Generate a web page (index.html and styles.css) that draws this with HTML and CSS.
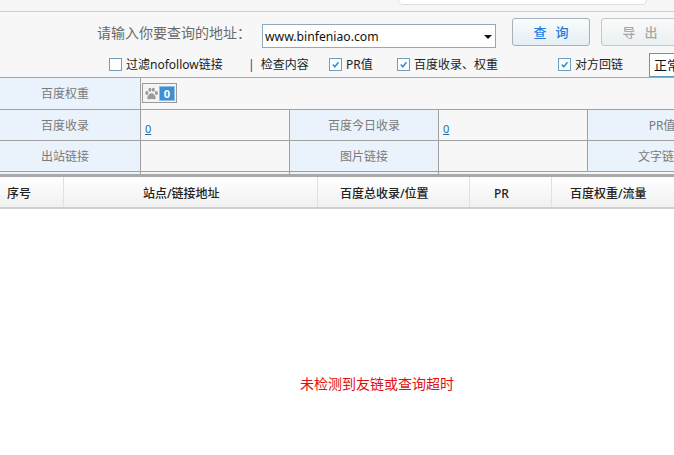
FILE: index.html
```html
<!DOCTYPE html>
<html lang="zh">
<head>
<meta charset="utf-8">
<title>友链查询</title>
<link rel="stylesheet" href="styles.css">
</head>
<body>
<div class="page">
  <div class="topstrip"><div class="topbox"></div></div>
  <form class="form">
    <div class="row-main">
      <span class="prompt">请输入你要查询的地址：</span>
      <div class="select"><span>www.binfeniao.com</span><i class="caret"></i></div>
      <button type="button" class="btn btn-query">查 询</button>
      <button type="button" class="btn btn-export">导 出</button>
    </div>
    <div class="row-opts">
      <span class="opt o1"><i class="cb"></i>过滤nofollow链接</span>
      <span class="opt o2"><b class="bar">|</b>检查内容</span>
      <span class="opt o3"><i class="cb on"><svg viewBox="0 0 14 14"><path d="M3.5 7l2.6 3L10.8 4" /></svg></i>PR值</span>
      <span class="opt o4"><i class="cb on"><svg viewBox="0 0 14 14"><path d="M3.5 7l2.6 3L10.8 4" /></svg></i>百度收录、权重</span>
      <span class="opt o5"><i class="cb on"><svg viewBox="0 0 14 14"><path d="M3.5 7l2.6 3L10.8 4" /></svg></i>对方回链</span>
      <span class="mode">正常</span>
    </div>
  </form>
  <div class="info">
    <div class="info-row r1">
      <div class="lab">百度权重</div>
      <div class="val wide">
        <span class="badge">
          <svg class="paw" viewBox="0 0 16 14"><g fill="#9a9a9a"><ellipse cx="3" cy="6.5" rx="1.7" ry="2.1"/><ellipse cx="6.3" cy="3" rx="1.6" ry="2.2"/><ellipse cx="10" cy="3" rx="1.6" ry="2.2"/><ellipse cx="13.2" cy="6.5" rx="1.7" ry="2.1"/><path d="M8 6.6c-2.2 0-4.6 3-4.6 5 0 1.7 1.8 1.9 2.7 1.6.9-.3 2.9-.3 3.8 0 1 .3 2.7.1 2.7-1.6 0-2-2.4-5-4.6-5z"/></g></svg>
          <span class="num">0</span>
        </span>
      </div>
    </div>
    <div class="info-row r2">
      <div class="lab">百度收录</div>
      <div class="val"><a class="zero">0</a></div>
      <div class="lab">百度今日收录</div>
      <div class="val"><a class="zero">0</a></div>
      <div class="lab">PR值</div>
      <div class="val"></div>
    </div>
    <div class="info-row r3">
      <div class="lab">出站链接</div>
      <div class="val"></div>
      <div class="lab">图片链接</div>
      <div class="val"></div>
      <div class="lab">文字链接</div>
      <div class="val"></div>
    </div>
    <div class="tail"><i></i><i></i><i></i></div>
  </div>
  <div class="thead">
    <div class="th c1">序号</div>
    <div class="th c2">站点/链接地址</div>
    <div class="th c3">百度总收录/位置</div>
    <div class="th c4">PR</div>
    <div class="th c5">百度权重/流量</div>
  </div>
  <div class="empty">未检测到友链或查询超时</div>
</div>
</body>
</html>
```
FILE: styles.css
```css
html, body { margin: 0; padding: 0; height: 100%; overflow: hidden; background: #fff; }
body { font-family: "Noto Sans", "Noto Sans CJK SC", sans-serif; color: #222; }
.page { width: 754px; }
.topstrip { height: 11px; background: #f6f6f6; border-bottom: 1px solid #cfcfcf; }
.topbox { width: 247px; height: 4px; margin-left: 398px; background: #fff; border: 1px solid #ddd; border-top: 0; border-radius: 0 0 5px 5px; }
.form { background: #f7f7f7; height: 66px; box-sizing: border-box; border-bottom: 1px solid #a8a8a8; }
.row-main { display: flex; align-items: flex-start; height: 42px; padding-left: 97px; }
.prompt { font-size: 14px; line-height: 20px; margin-top: 11px; width: 165px; color: #6a6a6a; white-space: nowrap; }
.select { box-sizing: border-box; width: 234px; height: 24px; margin-top: 12px; padding-left: 2px; background: #fff; border: 1px solid #8fa9bf; display: flex; align-items: center; justify-content: space-between; font-size: 12.2px; color: #111; }
.caret { width: 0; height: 0; margin-right: 3px; margin-top: 2px; border: 4px solid transparent; border-top: 4px solid #111; border-bottom: 0; }
.btn { box-sizing: border-box; width: 78px; height: 28px; margin: 6px 0 0 16px; padding: 0 0 2px; border: 1px solid #a5b0b8; border-radius: 3px; background: linear-gradient(#fafcfd, #e4eef4); font: 500 13px "Noto Sans CJK SC", sans-serif; word-spacing: 6px; }
.btn-query { color: #1c7ce0; }
.btn-export { margin-left: 11px; color: #a8a8a8; border-color: #c4c8cb; background: linear-gradient(#fafafa, #eaf0f2); }
.row-opts { display: flex; align-items: center; height: 20px; padding-left: 109px; font-size: 12px; color: #222; white-space: nowrap; }
.opt { display: flex; align-items: center; }
.cb { box-sizing: border-box; display: block; width: 13px; height: 13px; margin-right: 4px; background: #fff; border: 1px solid #6f9fbd; }
.cb svg { display: block; width: 11px; height: 11px; fill: none; stroke: #2b93d6; stroke-width: 2; }
.o1 { width: 141px; }
.o2 { width: 79px; }
.bar { font-weight: 400; margin: 0 6px 0 -2px; color: #1f3f66; }
.o3 { width: 68px; }
.o4 { width: 161px; }
.o5 { width: 91px; }
.mode { box-sizing: border-box; width: 60px; height: 24px; line-height: 22px; margin-top: 2px; padding-left: 4px; background: #fff; border: 1px solid #5c9bb5; border-right: 0; font-size: 13px; color: #111; }
.info { background: #f7f7f7; }
.info-row { display: grid; border-bottom: 1px solid #a0a0a0; box-sizing: border-box; }
.r1 { height: 32px; grid-template-columns: 141px 1fr; grid-template-rows: 31px; }
.r2, .r3 { height: 31px; grid-template-columns: 141px 149px 149px 149px 149px 17px; grid-template-rows: 30px; }
.lab { box-sizing: border-box; background: #eaf3fb; border-right: 1px solid #a0a0a0; color: #7a7a7a; font-size: 12px; line-height: 32px; text-align: center; white-space: nowrap; }
.lab:first-child { padding-right: 10px; }
.val { box-sizing: border-box; border-right: 1px solid #a0a0a0; padding-left: 4px; }
.wide { border-right: 0; padding: 5px 0 0 1px; }
.badge { box-sizing: border-box; display: flex; align-items: center; width: 35px; height: 20px; padding: 1px; background: #f4f4f4; border: 1px solid #9a9a9a; }
.paw { width: 15px; height: 13px; flex: none; }
.num { box-sizing: border-box; display: block; width: 17px; height: 15px; line-height: 13px; text-align: center; background: #3f8fd2; border: 1px solid #8fc0e8; color: #fff; font-size: 11px; font-weight: 700; }
.zero { display: block; margin-top: 11px; color: #1a6ea8; text-decoration: underline; font-size: 11px; line-height: 16px; }
.tail { display: grid; grid-template-columns: 141px 149px 149px 149px; height: 2px; }
.tail i { border-right: 1px solid #a0a0a0; background: #eaf3fb; }
.tail i:nth-child(2) { background: #f7f7f7; }
.thead { display: grid; grid-template-columns: 64px 254px 152px 82px 202px; grid-template-rows: 30px; height: 35px; box-sizing: border-box; border-top: 3px solid #a9a9a9; border-bottom: 2px solid #cfcfcf; background: linear-gradient(#ffffff, #f0f0f0); }
.th { box-sizing: border-box; font-size: 12px; font-weight: 500; line-height: 34px; color: #222; border-right: 1px solid #e2e2e2; white-space: nowrap; }
.c1 { padding-left: 7px; }
.c2 { padding-left: 79px; }
.c3 { padding-left: 22px; }
.c4 { padding-left: 24px; }
.c5 { padding-left: 18px; border-right: 0; }
.empty { margin-top: 165px; text-align: center; color: #e01010; font-size: 14px; line-height: 20px; }
```
